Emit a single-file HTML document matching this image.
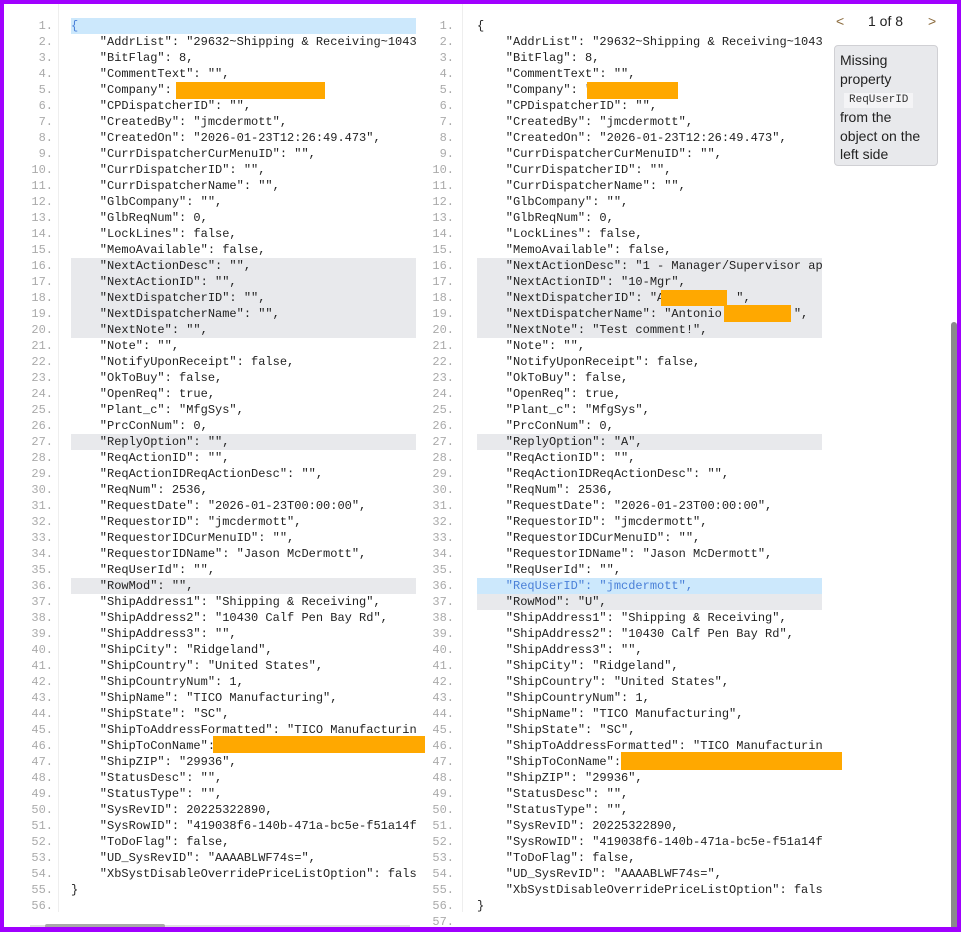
<!DOCTYPE html>
<html><head><meta charset="utf-8"><style>
*{margin:0;padding:0;box-sizing:border-box}
html,body{width:961px;height:932px;overflow:hidden;background:#fff}
.frame{position:absolute;left:0;top:0;width:961px;height:932px;border:4px solid #a000ff;border-bottom-width:5px}
.pane{position:absolute;top:18px;left:0;font-family:"Liberation Mono",monospace;font-size:12px;color:#222}
.nums{position:absolute;top:0;width:40px;text-align:right;color:#aaa;line-height:16px;white-space:pre}
.gut{position:absolute;top:-18px;width:1px;height:912px;background:#eee}
.code{position:absolute;top:0;overflow:hidden;line-height:16px}
.code div{height:16px;white-space:pre}
.g{background:#e8e9ec}
.b{background:#cce8fc;color:#4a80d8}
.red{position:absolute;background:#ffa800}
.panel{position:absolute;left:834px;top:45px;width:104px;height:121px;background:#e8e9ec;border:1px solid #d0d0d4;border-radius:4px;font-family:"Liberation Sans",Arial,sans-serif;font-size:14px;line-height:18.5px;color:#222;padding:5px 5px}
.panel code{display:inline-block;background:#f4f4f6;font-family:"Liberation Mono",monospace;font-size:11px;padding:0 5px;margin:2px 0 0 4px;line-height:15px;color:#333}
.nav{position:absolute;top:13px;font-family:"Liberation Sans",Arial,sans-serif;font-size:14px;color:#222}
</style></head><body>
<div class="pane">
<div class="nums" style="left:13px">1.
2.
3.
4.
5.
6.
7.
8.
9.
10.
11.
12.
13.
14.
15.
16.
17.
18.
19.
20.
21.
22.
23.
24.
25.
26.
27.
28.
29.
30.
31.
32.
33.
34.
35.
36.
37.
38.
39.
40.
41.
42.
43.
44.
45.
46.
47.
48.
49.
50.
51.
52.
53.
54.
55.
56.</div>
<div class="gut" style="left:58px"></div>
<div class="code" style="left:71px;width:345px"><div class="b">{</div><div>    "AddrList": "29632~Shipping &amp; Receiving~10430 Calf Pen Bay Rd",</div><div>    "BitFlag": 8,</div><div>    "CommentText": "",</div><div>    "Company": "",</div><div>    "CPDispatcherID": "",</div><div>    "CreatedBy": "jmcdermott",</div><div>    "CreatedOn": "2026-01-23T12:26:49.473",</div><div>    "CurrDispatcherCurMenuID": "",</div><div>    "CurrDispatcherID": "",</div><div>    "CurrDispatcherName": "",</div><div>    "GlbCompany": "",</div><div>    "GlbReqNum": 0,</div><div>    "LockLines": false,</div><div>    "MemoAvailable": false,</div><div class="g">    "NextActionDesc": "",</div><div class="g">    "NextActionID": "",</div><div class="g">    "NextDispatcherID": "",</div><div class="g">    "NextDispatcherName": "",</div><div class="g">    "NextNote": "",</div><div>    "Note": "",</div><div>    "NotifyUponReceipt": false,</div><div>    "OkToBuy": false,</div><div>    "OpenReq": true,</div><div>    "Plant_c": "MfgSys",</div><div>    "PrcConNum": 0,</div><div class="g">    "ReplyOption": "",</div><div>    "ReqActionID": "",</div><div>    "ReqActionIDReqActionDesc": "",</div><div>    "ReqNum": 2536,</div><div>    "RequestDate": "2026-01-23T00:00:00",</div><div>    "RequestorID": "jmcdermott",</div><div>    "RequestorIDCurMenuID": "",</div><div>    "RequestorIDName": "Jason McDermott",</div><div>    "ReqUserId": "",</div><div class="g">    "RowMod": "",</div><div>    "ShipAddress1": "Shipping &amp; Receiving",</div><div>    "ShipAddress2": "10430 Calf Pen Bay Rd",</div><div>    "ShipAddress3": "",</div><div>    "ShipCity": "Ridgeland",</div><div>    "ShipCountry": "United States",</div><div>    "ShipCountryNum": 1,</div><div>    "ShipName": "TICO Manufacturing",</div><div>    "ShipState": "SC",</div><div>    "ShipToAddressFormatted": "TICO Manufacturing, Shipping",</div><div>    "ShipToConName": "",</div><div>    "ShipZIP": "29936",</div><div>    "StatusDesc": "",</div><div>    "StatusType": "",</div><div>    "SysRevID": 20225322890,</div><div>    "SysRowID": "419038f6-140b-471a-bc5e-f51a14fa0000",</div><div>    "ToDoFlag": false,</div><div>    "UD_SysRevID": "AAAABLWF74s=",</div><div>    "XbSystDisableOverridePriceListOption": false</div><div>}</div><div></div></div>
</div>

<div class="pane">
<div class="nums" style="left:414px">1.
2.
3.
4.
5.
6.
7.
8.
9.
10.
11.
12.
13.
14.
15.
16.
17.
18.
19.
20.
21.
22.
23.
24.
25.
26.
27.
28.
29.
30.
31.
32.
33.
34.
35.
36.
37.
38.
39.
40.
41.
42.
43.
44.
45.
46.
47.
48.
49.
50.
51.
52.
53.
54.
55.
56.
57.</div>
<div class="gut" style="left:462px"></div>
<div class="code" style="left:477px;width:345px"><div>{</div><div>    "AddrList": "29632~Shipping &amp; Receiving~10430 Calf Pen Bay Rd",</div><div>    "BitFlag": 8,</div><div>    "CommentText": "",</div><div>    "Company": "",</div><div>    "CPDispatcherID": "",</div><div>    "CreatedBy": "jmcdermott",</div><div>    "CreatedOn": "2026-01-23T12:26:49.473",</div><div>    "CurrDispatcherCurMenuID": "",</div><div>    "CurrDispatcherID": "",</div><div>    "CurrDispatcherName": "",</div><div>    "GlbCompany": "",</div><div>    "GlbReqNum": 0,</div><div>    "LockLines": false,</div><div>    "MemoAvailable": false,</div><div class="g">    "NextActionDesc": "1 - Manager/Supervisor approval",</div><div class="g">    "NextActionID": "10-Mgr",</div><div class="g">    "NextDispatcherID": "A          ",</div><div class="g">    "NextDispatcherName": "Antonio          ",</div><div class="g">    "NextNote": "Test comment!",</div><div>    "Note": "",</div><div>    "NotifyUponReceipt": false,</div><div>    "OkToBuy": false,</div><div>    "OpenReq": true,</div><div>    "Plant_c": "MfgSys",</div><div>    "PrcConNum": 0,</div><div class="g">    "ReplyOption": "A",</div><div>    "ReqActionID": "",</div><div>    "ReqActionIDReqActionDesc": "",</div><div>    "ReqNum": 2536,</div><div>    "RequestDate": "2026-01-23T00:00:00",</div><div>    "RequestorID": "jmcdermott",</div><div>    "RequestorIDCurMenuID": "",</div><div>    "RequestorIDName": "Jason McDermott",</div><div>    "ReqUserId": "",</div><div class="b">    "ReqUserID": "jmcdermott",</div><div class="g">    "RowMod": "U",</div><div>    "ShipAddress1": "Shipping &amp; Receiving",</div><div>    "ShipAddress2": "10430 Calf Pen Bay Rd",</div><div>    "ShipAddress3": "",</div><div>    "ShipCity": "Ridgeland",</div><div>    "ShipCountry": "United States",</div><div>    "ShipCountryNum": 1,</div><div>    "ShipName": "TICO Manufacturing",</div><div>    "ShipState": "SC",</div><div>    "ShipToAddressFormatted": "TICO Manufacturing, Shipping",</div><div>    "ShipToConName": "",</div><div>    "ShipZIP": "29936",</div><div>    "StatusDesc": "",</div><div>    "StatusType": "",</div><div>    "SysRevID": 20225322890,</div><div>    "SysRowID": "419038f6-140b-471a-bc5e-f51a14fa0000",</div><div>    "ToDoFlag": false,</div><div>    "UD_SysRevID": "AAAABLWF74s=",</div><div>    "XbSystDisableOverridePriceListOption": false</div><div>}</div><div></div></div>
</div>

<div class="red" style="left:176px;top:82px;width:149px;height:17px"></div>
<div class="red" style="left:587px;top:82px;width:91px;height:17px"></div>
<div class="red" style="left:661px;top:290px;width:66px;height:16px"></div>
<div class="red" style="left:724px;top:305px;width:67px;height:17px"></div>
<div class="red" style="left:213px;top:736px;width:212px;height:17px"></div>
<div class="red" style="left:621px;top:752px;width:221px;height:18px"></div>

<div class="nav" style="left:836px;color:#8b6b3d">&lt;</div>
<div class="nav" style="left:868px">1 of 8</div>
<div class="nav" style="left:928px;color:#8b6b3d">&gt;</div>
<div class="panel">Missing<br>property<br><code>ReqUserID</code><br>from the<br>object on the<br>left side</div>

<div style="position:absolute;left:951px;top:322px;width:6px;height:606px;background:#8a8a8a;border-radius:3px 3px 0 0"></div>
<div style="position:absolute;left:30px;top:925px;width:380px;height:3px;background:#e0e0e0"></div>
<div style="position:absolute;left:45px;top:924px;width:120px;height:4px;background:#a8a8a8;border-radius:2px"></div>
<div class="frame"></div>
</body></html>
